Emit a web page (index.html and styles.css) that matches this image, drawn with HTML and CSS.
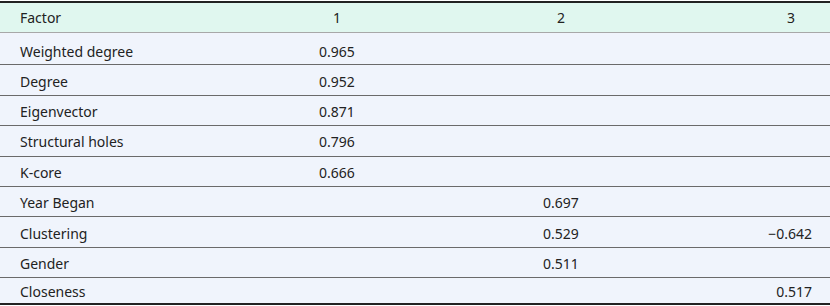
FILE: index.html
```html
<!DOCTYPE html>
<html>
<head>
<meta charset="utf-8">
<link rel="stylesheet" href="styles.css">
</head>
<body>
<div class="table">
  <div class="row head">
    <div class="c0">Factor</div><div class="c1">1</div><div class="c2">2</div><div class="c3 h3">3</div>
  </div>
  <div class="row first"><div class="c0">Weighted degree</div><div class="c1">0.965</div><div class="c2"></div><div class="c3"></div></div>
  <div class="row"><div class="c0">Degree</div><div class="c1">0.952</div><div class="c2"></div><div class="c3"></div></div>
  <div class="row"><div class="c0">Eigenvector</div><div class="c1">0.871</div><div class="c2"></div><div class="c3"></div></div>
  <div class="row"><div class="c0">Structural holes</div><div class="c1">0.796</div><div class="c2"></div><div class="c3"></div></div>
  <div class="row"><div class="c0">K-core</div><div class="c1">0.666</div><div class="c2"></div><div class="c3"></div></div>
  <div class="row"><div class="c0">Year Began</div><div class="c1"></div><div class="c2">0.697</div><div class="c3"></div></div>
  <div class="row"><div class="c0">Clustering</div><div class="c1"></div><div class="c2">0.529</div><div class="c3">&minus;0.642</div></div>
  <div class="row"><div class="c0">Gender</div><div class="c1"></div><div class="c2">0.511</div><div class="c3"></div></div>
  <div class="row last"><div class="c0">Closeness</div><div class="c1"></div><div class="c2"></div><div class="c3">0.517</div></div>
</div>
</body>
</html>
```
FILE: styles.css
```css
html, body {
  margin: 0;
  padding: 0;
  background: #ffffff;
}
body {
  padding-top: 1px;
  font-family: "Noto Sans", "Open Sans", sans-serif;
  font-size: 14px;
  color: #222;
}
.table {
  width: 830px;
  border-top: 2px solid #222;
  border-bottom: 2px solid #222;
  background: #f0f4fc;
}
.row {
  display: grid;
  grid-template-columns: 290px 94px 354px 1fr;
  height: 27.4px;
  padding-top: 2px;
  box-sizing: content-box;
  align-items: center;
  border-bottom: 1px solid #6a6a6a;
}
.row.head {
  background: #e0f7ef;
  height: 29px;
  padding-top: 0;
  border-bottom: 1px solid #a8a8a8;
}
.row.first {
  height: 25.4px;
  padding-top: 6px;
}
.row.last {
  height: 22.8px;
  border-bottom: none;
}
.c0 {
  padding-left: 20px;
}
.c1, .c2 {
  text-align: center;
}
.c3 {
  text-align: right;
  padding-right: 18px;
}
.c3.h3 {
  text-align: center;
  padding-right: 0;
  padding-left: 14px;
}
```
